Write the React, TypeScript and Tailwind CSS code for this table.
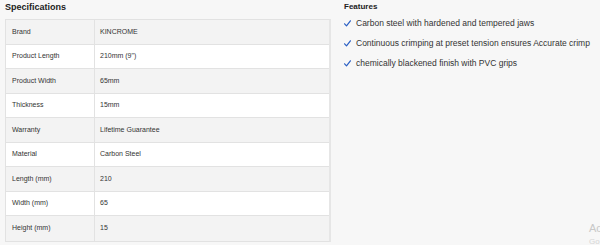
import React from 'react';

const specs: [string, string][] = [
  ['Brand', 'KINCROME'],
  ['Product Length', '210mm (9")'],
  ['Product Width', '65mm'],
  ['Thickness', '15mm'],
  ['Warranty', 'Lifetime Guarantee'],
  ['Material', 'Carbon Steel'],
  ['Length (mm)', '210'],
  ['Width (mm)', '65'],
  ['Height (mm)', '15'],
];

const features = [
  'Carbon steel with hardened and tempered jaws',
  'Continuous crimping at preset tension ensures Accurate crimp',
  'chemically blackened finish with PVC grips',
];

const Check = () => (
  <svg width="7" height="7" viewBox="0 0 7 7" className="mr-[5px] shrink-0">
    <path d="M0.6 3.8 L2.5 5.8 L6.4 0.8" fill="none" stroke="#2a5fc4" strokeWidth="1.2" strokeLinecap="round" strokeLinejoin="round" />
  </svg>
);

const App: React.FC = () => (
  <div className="relative w-[600px] h-[245px] overflow-hidden bg-[#f7f7f7] flex font-['Liberation_Sans',Arial,sans-serif]">
    {/* Specifications */}
    <div className="w-[343px] pl-[5px] shrink-0">
      <h3 className="h-[19px] pt-[1px] text-[9px] font-bold leading-[12px] text-[#222]">Specifications</h3>
      <div className="w-[326px] border border-[#e2e2e2] border-r-2 border-r-[#e6e6e6]">
        {specs.map(([k, v], i) => (
          <div
            key={k}
            className={`flex h-[24.5px] items-center text-[7px] text-[#333] border-b border-[#e2e2e2] last:border-b-0 ${i % 2 === 0 ? 'bg-[#f3f3f3]' : 'bg-white'}`}
          >
            <div className="w-[89px] h-full flex items-center pl-[6px] border-r border-[#e2e2e2]">{k}</div>
            <div className="flex-1 pl-[5px]">{v}</div>
          </div>
        ))}
      </div>
    </div>

    {/* Features */}
    <div className="pt-[1px] pl-[1px]">
      <h3 className="text-[8px] font-bold leading-[12px] text-[#222]">Features</h3>
      <ul className="mt-[4px] flex flex-col gap-[7px]">
        {features.map((f) => (
          <li key={f} className="flex items-center h-[13px] text-[8.5px] text-[#333]">
            <Check />
            <span>{f}</span>
          </li>
        ))}
      </ul>
    </div>

    {/* watermark */}
    <div className="absolute left-[589px] top-[222px] text-[11px] leading-[13px] text-[#c8c8c8] whitespace-nowrap">
      <div>Activate</div>
      <div className="text-[8px] text-[#d6d6d6]">Go to</div>
    </div>
  </div>
);

export default App;
